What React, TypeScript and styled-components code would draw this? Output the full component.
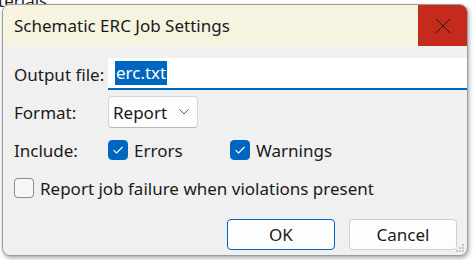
import React from "react";
import styled, { createGlobalStyle } from "styled-components";

// Global

const GlobalStyle = createGlobalStyle`
  html, body {
    margin: 0;
    padding: 0;
    background: #ffffff;
  }
  body {
    width: 474px;
    height: 260px;
    overflow: hidden;
    font-family: "Noto Sans", "Open Sans", sans-serif;
    font-size: 17px;
    color: #1a1a1a;
  }
`;

// Styled Components

const Desktop = styled.div`
  position: relative;
  width: 474px;
  height: 260px;
  padding: 4px 0 0 2px;
  box-sizing: border-box;
`;

const BehindText = styled.div`
  position: absolute;
  top: -11px;
  left: -2px;
  font-size: 17px;
  color: #222;
`;

const Window = styled.div`
  position: relative;
  z-index: 1;
  width: 466px;
  height: 252px;
  box-sizing: border-box;
  display: flex;
  flex-direction: column;
  background: #f0f0f0;
  border: 1px solid #9c9c9c;
  border-radius: 8px;
  overflow: hidden;
  box-shadow: 1px 2px 4px rgba(0, 0, 0, 0.35);
`;

const TitleBar = styled.div`
  height: 41px;
  flex: none;
  display: flex;
  align-items: center;
  background: #f6f4e0;
`;

const Title = styled.div`
  flex: 1;
  padding-left: 11px;
`;

const CloseButton = styled.div`
  width: 49px;
  height: 100%;
  display: flex;
  align-items: center;
  justify-content: center;
  background: #c42b1c;
`;

const Body = styled.div`
  flex: 1;
  display: flex;
  flex-direction: column;
  padding: 12px 0 0 11px;
`;

const Form = styled.div`
  display: grid;
  grid-template-columns: 94px 1fr;
  grid-auto-rows: 32px;
  row-gap: 6px;
  align-items: center;
`;

const Label = styled.div``;

const FullRow = styled.div`
  grid-column: 1 / span 2;
  display: flex;
  align-items: center;
`;

const TextField = styled.div`
  height: 32px;
  box-sizing: border-box;
  display: flex;
  align-items: center;
  padding-left: 7px;
  background: #ffffff;
  border-bottom: 2px solid #0067c0;
`;

const Selection = styled.span`
  background: #0067c0;
  color: #ffffff;
  line-height: 24px;
  padding: 0 1px;
`;

const Select = styled.div`
  width: 90px;
  height: 32px;
  box-sizing: border-box;
  display: flex;
  align-items: center;
  justify-content: space-between;
  padding: 0 8px 0 4px;
  background: #fdfdfd;
  border: 1px solid #d6d6d6;
  border-bottom-color: #b8b8b8;
  border-radius: 4px;
`;

const Checks = styled.div`
  display: flex;
  align-items: center;
`;

const CheckItem = styled.label<{ $width?: number }>`
  display: flex;
  align-items: center;
  gap: 6px;
  width: ${(p) => (p.$width ? `${p.$width}px` : "auto")};
`;

const Box = styled.span<{ $checked?: boolean }>`
  width: 20px;
  height: 20px;
  box-sizing: border-box;
  display: flex;
  align-items: center;
  justify-content: center;
  border-radius: 4px;
  background: ${(p) => (p.$checked ? "#0067c0" : "#f7f7f7")};
  border: 1px solid ${(p) => (p.$checked ? "#0067c0" : "#8a8a8a")};
`;

const Footer = styled.div`
  margin-top: auto;
  display: flex;
  justify-content: flex-end;
  gap: 14px;
  padding: 0 10px 5px 0;
`;

const Button = styled.div<{ $primary?: boolean }>`
  width: 108px;
  height: 31px;
  box-sizing: border-box;
  display: flex;
  align-items: center;
  justify-content: center;
  background: #fdfdfd;
  border: 1px solid ${(p) => (p.$primary ? "#0067c0" : "#d0d0d0")};
  border-radius: 4px;
`;

const Grip = styled.svg`
  position: absolute;
  right: 2px;
  bottom: 2px;
`;

function Check({ checked, label, width }: { checked?: boolean; label: string; width?: number }) {
  return (
    <CheckItem $width={width}>
      <Box $checked={checked}>
        {checked ? (
          <svg width="12" height="10" viewBox="0 0 12 10">
            <path d="M1.5 5.2 L4.5 8 L10.5 2" fill="none" stroke="#fff" strokeWidth="1.1" />
          </svg>
        ) : null}
      </Box>
      {label}
    </CheckItem>
  );
}

function App() {
  return (
    <>
      <GlobalStyle />
      <Desktop>
        <BehindText>terials</BehindText>
        <Window>
          <TitleBar>
            <Title>Schematic ERC Job Settings</Title>
            <CloseButton>
              <svg width="16" height="16" viewBox="0 0 16 16">
                <path d="M1 1 L15 15 M15 1 L1 15" stroke="#1a1a1a" strokeWidth="1" />
              </svg>
            </CloseButton>
          </TitleBar>
          <Body>
            <Form>
              <Label>Output file:</Label>
              <TextField>
                <Selection>erc.txt</Selection>
              </TextField>
              <Label>Format:</Label>
              <div>
                <Select>
                  Report
                  <svg width="10" height="6" viewBox="0 0 10 6">
                    <path d="M0.5 0.5 L5 5 L9.5 0.5" fill="none" stroke="#555" strokeWidth="1" />
                  </svg>
                </Select>
              </div>
              <Label>Include:</Label>
              <Checks>
                <Check checked label="Errors" width={122} />
                <Check checked label="Warnings" />
              </Checks>
              <FullRow>
                <Check label="Report job failure when violations present" />
              </FullRow>
            </Form>
            <Footer>
              <Button $primary>OK</Button>
              <Button>Cancel</Button>
            </Footer>
          </Body>
          <Grip width="10" height="10" viewBox="0 0 10 10">
            <g fill="#c4c4c4">
              <rect x="7" y="1" width="2" height="2" />
              <rect x="4" y="4" width="2" height="2" />
              <rect x="7" y="4" width="2" height="2" />
              <rect x="1" y="7" width="2" height="2" />
              <rect x="4" y="7" width="2" height="2" />
              <rect x="7" y="7" width="2" height="2" />
            </g>
          </Grip>
        </Window>
      </Desktop>
    </>
  );
}

export default App;
